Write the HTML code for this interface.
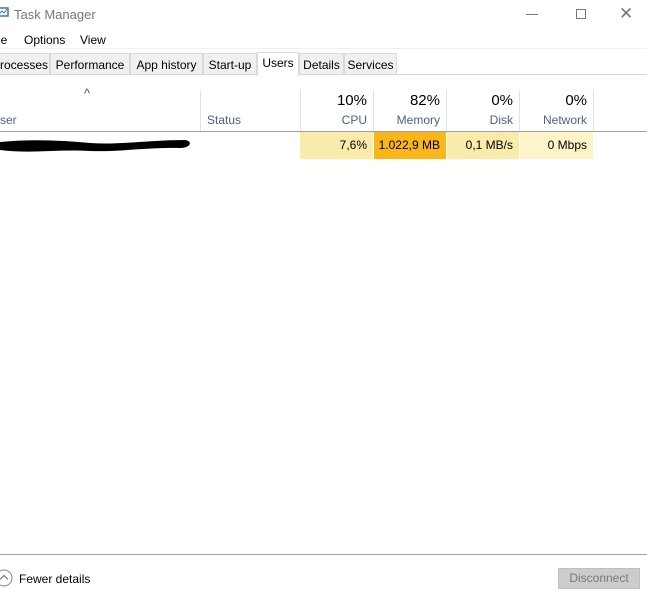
<!DOCTYPE html><html><head><style>
*{margin:0;padding:0;box-sizing:border-box}
body{width:647px;height:589px;background:#fff;font-family:"Liberation Sans",sans-serif;font-size:12px;color:#000;position:relative;overflow:hidden}
.a{position:absolute;white-space:nowrap}
.tab{position:absolute;top:53px;height:22px;border:1px solid #d9d9d9;background:#f0f0f0;font-size:12px;line-height:22px;text-align:center}
.hd{position:absolute;top:90px;height:41px;border-right:1px solid #e2e2e2;text-align:right;padding-right:6px}
.hd b{display:block;font-weight:normal;font-size:15px;color:#000;margin-top:2px}
.hd i{display:block;font-style:normal;color:#4d6082;margin-top:4px}
.c{position:absolute;top:132px;height:27px;line-height:27px;text-align:right;padding-right:6px;border-right:1px solid #fff}
</style></head><body>
<svg class="a" style="left:0;top:6px" width="10" height="14"><rect x="-2" y="2" width="10" height="8" fill="none" stroke="#3a78b5" stroke-width="1.5"/><path d="M-1 8l3-3 2 2 3-4" stroke="#3a78b5" fill="none"/></svg>
<div class="a" style="left:14px;top:7px;color:#777;font-size:13px">Task Manager</div>
<div class="a" style="left:526px;top:14px;width:12px;border-top:1px solid #777"></div>
<div class="a" style="left:576px;top:9px;width:10px;height:10px;border:1px solid #777"></div>
<div class="a" style="left:619px;top:4px;color:#777;font-size:17px">✕</div>
<div class="a" style="left:-2px;top:33px">le</div>
<div class="a" style="left:24px;top:33px">Options</div>
<div class="a" style="left:80px;top:33px">View</div>
<div class="a" style="left:0;top:48px;width:647px;border-top:1px solid #f0f0f0"></div>
<div class="a" style="left:0;top:74px;width:647px;border-top:1px solid #d9d9d9"></div>
<div class="tab" style="left:-10px;width:60px">Processes</div>
<div class="tab" style="left:50px;width:80px">Performance</div>
<div class="tab" style="left:130px;width:73px">App history</div>
<div class="tab" style="left:203px;width:54px">Start-up</div>
<div class="tab" style="left:257px;top:52px;height:24px;width:42px;background:#fff;border-bottom:none;line-height:20px">Users</div>
<div class="tab" style="left:299px;width:45px">Details</div>
<div class="tab" style="left:344px;width:53px">Services</div>
<div class="a" style="left:84px;top:86px;color:#555;font-size:13px">^</div>
<div class="hd" style="left:0;width:201px;text-align:left"><i style="color:#4d6082;margin-top:23px">ser</i></div>
<div class="hd" style="left:201px;width:100px;text-align:left;padding-left:6px"><i style="margin-top:23px">Status</i></div>
<div class="hd" style="left:300px;width:74px"><b>10%</b><i>CPU</i></div>
<div class="hd" style="left:374px;width:73px"><b>82%</b><i>Memory</i></div>
<div class="hd" style="left:447px;width:73px"><b>0%</b><i>Disk</i></div>
<div class="hd" style="left:520px;width:74px"><b>0%</b><i>Network</i></div>
<div class="a" style="left:0;top:131px;width:647px;border-top:1px solid #a0a0a0"></div>
<svg class="a" style="left:0;top:137px" width="195" height="20"><path d="M0 5C30 2 60 3 90 6 120 8 150 3 185 3 193 4 191 11 180 11 150 10 120 15 90 14 60 12 30 17 0 13Z" fill="#000"/></svg>
<div class="c" style="left:300px;width:74px;background:#f9ecaa">7,6%</div>
<div class="c" style="left:374px;width:73px;background:#f9b618">1.022,9 MB</div>
<div class="c" style="left:447px;width:73px;background:#f9ecaa">0,1 MB/s</div>
<div class="c" style="left:520px;width:74px;background:#fdf4c9">0 Mbps</div>
<div class="a" style="left:0;top:554px;width:647px;border-top:1px solid #a0a0a0"></div>
<svg class="a" style="left:-5px;top:569px" width="18" height="18"><circle cx="9" cy="9" r="8" fill="none" stroke="#888"/><path d="M5 10.5l4-4 4 4" fill="none" stroke="#666"/></svg>
<div class="a" style="left:19px;top:572px">Fewer details</div>
<div class="a" style="left:558px;top:568px;width:82px;height:21px;background:#cccccc;border:1px solid #bfbfbf;color:#7a7a7a;text-align:center;line-height:19px">Disconnect</div>
</body></html>
